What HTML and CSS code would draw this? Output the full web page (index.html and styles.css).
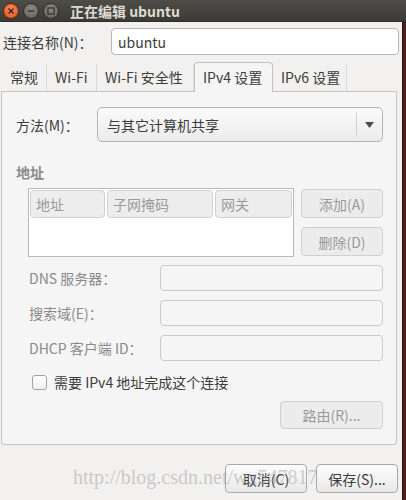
FILE: index.html
```html
<!DOCTYPE html>
<html lang="zh-CN">
<head>
    <meta charset="UTF-8">
    <meta name="viewport" content="width=device-width, initial-scale=1.0">
    <title>正在编辑 ubuntu</title>
    <link rel="stylesheet" href="styles.css">
</head>
<body>
    <div class="titlebar">
        <div class="controls">
            <span class="ctl ctl-close">
                <svg width="8" height="8" viewBox="0 0 8 8"><path d="M1.5 1.5 L6.5 6.5 M6.5 1.5 L1.5 6.5" stroke="#4a1c0c" stroke-width="1.4"/></svg>
            </span>
            <span class="ctl">
                <svg width="10" height="10" viewBox="0 0 10 10"><path d="M2 5 H8" stroke="#3a3935" stroke-width="1.6"/></svg>
            </span>
            <span class="ctl">
                <svg width="10" height="10" viewBox="0 0 10 10"><rect x="2" y="2" width="6" height="6" fill="none" stroke="#3a3935" stroke-width="1.4"/></svg>
            </span>
        </div>
        <div class="title">正在编辑 ubuntu</div>
    </div>

    <div class="main">
        <div class="dialog">
            <div class="name-row">
                <label>连接名称(N)：</label>
                <input type="text" class="name-input" value="ubuntu">
            </div>

            <div class="tabs">
                <div class="tab tab-general">常规</div>
                <div class="tab tab-wifi">Wi-Fi</div>
                <div class="tab tab-security">Wi-Fi 安全性</div>
                <div class="tab tab-active">IPv4 设置</div>
                <div class="tab tab-ipv6">IPv6 设置</div>
            </div>

            <div class="panel">
                <div class="method-row">
                    <label>方法(M)：</label>
                    <div class="combo">
                        <span class="combo-text">与其它计算机共享</span>
                        <span class="combo-arrow">
                            <svg width="9" height="6" viewBox="0 0 9 6"><path d="M0 0 H9 L4.5 6 Z" fill="#4c4c4c"/></svg>
                        </span>
                    </div>
                </div>

                <div class="section-title">地址</div>

                <div class="address-row">
                    <div class="address-list">
                        <div class="list-header">
                            <div class="col col-addr">地址</div>
                            <div class="col col-mask">子网掩码</div>
                            <div class="col col-gw">网关</div>
                        </div>
                    </div>
                    <div class="address-buttons">
                        <button class="btn btn-disabled">添加(A)</button>
                        <button class="btn btn-disabled">删除(D)</button>
                    </div>
                </div>

                <div class="field-row">
                    <label>DNS 服务器：</label>
                    <div class="field"></div>
                </div>
                <div class="field-row">
                    <label>搜索域(E)：</label>
                    <div class="field"></div>
                </div>
                <div class="field-row">
                    <label>DHCP 客户端 ID：</label>
                    <div class="field"></div>
                </div>

                <div class="check-row">
                    <span class="checkbox"></span>
                    <span>需要 IPv4 地址完成这个连接</span>
                </div>

                <div class="route-row">
                    <button class="btn btn-disabled btn-route">路由(R)...</button>
                </div>
            </div>

            <div class="actions">
                <button class="btn">取消(C)</button>
                <button class="btn">保存(S)...</button>
            </div>

            <div class="watermark">http://blog.csdn.net/wx547817</div>
        </div>
        <div class="desktop"></div>
    </div>
</body>
</html>
```

FILE: styles.css
```css
/* Ubuntu Ambiance style dialog */
* {
    box-sizing: border-box;
}
body {
    margin: 0;
    width: 406px;
    height: 500px;
    overflow: hidden;
    font-family: "Noto Sans CJK SC", "Noto Sans", sans-serif;
    font-size: 14px;
    color: #3c3c3c;
    background: #f2f1f0;
}
.titlebar {
    height: 22px;
    display: flex;
    align-items: center;
    background: linear-gradient(#4d4c47, #3c3b37);
    border-bottom: 1px solid #2f2e2b;
}
.controls {
    display: flex;
    gap: 4px;
    padding-left: 3px;
}
.ctl {
    width: 16px;
    height: 16px;
    border-radius: 50%;
    display: flex;
    align-items: center;
    justify-content: center;
    background: radial-gradient(circle at 50% 35%, #8a8984, #5e5d58);
    border: 1px solid #2e2d2a;
}
.ctl-close {
    background: radial-gradient(circle at 50% 35%, #f7885a, #e0501f);
    border-color: #5b2a16;
}
.title {
    margin-left: 11px;
    color: #dfdbd2;
    font-weight: bold;
    font-size: 14px;
    line-height: 22px;
}
.main {
    display: flex;
    height: 478px;
}
.dialog {
    position: relative;
    width: 402px;
    padding: 6px 4px 0 1px;
    background: #f2f1f0;
}
.desktop {
    flex: 1;
    background: #4b1f1c;
    border-left: 1px solid #2a1513;
}
label {
    white-space: nowrap;
}
.name-row {
    display: flex;
    align-items: center;
    justify-content: space-between;
    padding-left: 2px;
}
.name-input {
    width: 288px;
    height: 27px;
    margin-right: -1px;
    border: 1px solid #b8b8b8;
    border-radius: 4px;
    background: #ffffff;
    padding: 0 6px;
    font: inherit;
    color: #3c3c3c;
}
.tabs {
    display: flex;
    align-items: flex-end;
    height: 29px;
    margin-top: 7px;
    padding-left: 1px;
    position: relative;
    z-index: 1;
}
.tab {
    height: 27px;
    line-height: 27px;
    padding: 0 8px;
    border-right: 1px solid #dcdbd9;
    white-space: nowrap;
}
.tab-general {
    width: 45px;
}
.tab-wifi {
    width: 50px;
}
.tab-security {
    width: 97px;
}
.tab-ipv6 {
    width: 74px;
}
.tab-active {
    width: 79px;
    height: 30px;
    line-height: 28px;
    background: #f5f5f5;
    border: 1px solid #c2c1bf;
    border-bottom: none;
    border-radius: 4px 4px 0 0;
    margin-bottom: -1px;
}
.panel {
    width: 396px;
    border: 1px solid #c5c4c2;
    border-radius: 0 0 3px 3px;
    background: #f5f5f5;
    padding: 15px 13px 15px 14px;
}
.method-row {
    display: flex;
    align-items: center;
    justify-content: space-between;
    height: 35px;
}
.combo {
    width: 286px;
    height: 35px;
    display: flex;
    align-items: center;
    border: 1px solid #b3b3b3;
    border-radius: 5px;
    background: linear-gradient(#fbfbfb, #ebebeb);
}
.combo-text {
    flex: 1;
    padding-left: 9px;
}
.combo-arrow {
    width: 26px;
    height: 25px;
    display: flex;
    align-items: center;
    justify-content: center;
    border-left: 1px solid #d3d3d3;
}
.section-title {
    margin-top: 21px;
    line-height: 18px;
    font-weight: bold;
    color: #8a8a8a;
}
.address-row {
    display: flex;
    gap: 7px;
    margin-top: 7px;
    margin-left: 12px;
}
.address-list {
    width: 266px;
    height: 69px;
    border: 1px solid #b9b9b9;
    background: #ffffff;
    padding: 1px;
}
.list-header {
    display: flex;
    gap: 2px;
}
.col {
    height: 28px;
    line-height: 26px;
    padding-left: 5px;
    border: 1px solid #d2d2d2;
    border-radius: 4px;
    background: #ededed;
    color: #9a9a9a;
}
.col-addr {
    width: 75px;
}
.col-mask {
    width: 106px;
}
.col-gw {
    width: 77px;
}
.address-buttons {
    display: flex;
    flex-direction: column;
    gap: 9px;
    padding-top: 1px;
}
.btn {
    width: 82px;
    height: 29px;
    border: 1px solid #a9a9a9;
    border-radius: 4px;
    background: linear-gradient(#fcfcfc, #e9e9e9);
    font: inherit;
    color: #3c3c3c;
    padding: 0;
}
.btn-disabled {
    border-color: #d0d0d0;
    background: #ececec;
    color: #999999;
}
.field-row {
    display: flex;
    align-items: center;
    justify-content: space-between;
    height: 26px;
    margin-top: 9px;
    padding-left: 13px;
    color: #8a8a8a;
}
.address-row + .field-row {
    margin-top: 8px;
}
.field {
    width: 223px;
    height: 26px;
    border: 1px solid #cbcbcb;
    border-radius: 4px;
    background: #f5f5f5;
}
.check-row {
    display: flex;
    align-items: center;
    gap: 7px;
    height: 16px;
    margin-top: 13px;
    padding-left: 16px;
}
.checkbox {
    width: 15px;
    height: 15px;
    border: 1px solid #a3a3a3;
    border-radius: 3px;
    background: linear-gradient(#ffffff, #f0f0f0);
}
.route-row {
    display: flex;
    justify-content: flex-end;
    margin-top: 11px;
}
.btn-route {
    width: 103px;
    height: 28px;
}
.actions {
    display: flex;
    justify-content: flex-end;
    gap: 9px;
    margin-top: 19px;
}
.watermark {
    position: absolute;
    left: 73px;
    top: 444px;
    font-family: "Liberation Serif", serif;
    font-size: 20px;
    color: rgba(160, 160, 160, 0.5);
    pointer-events: none;
}
```
